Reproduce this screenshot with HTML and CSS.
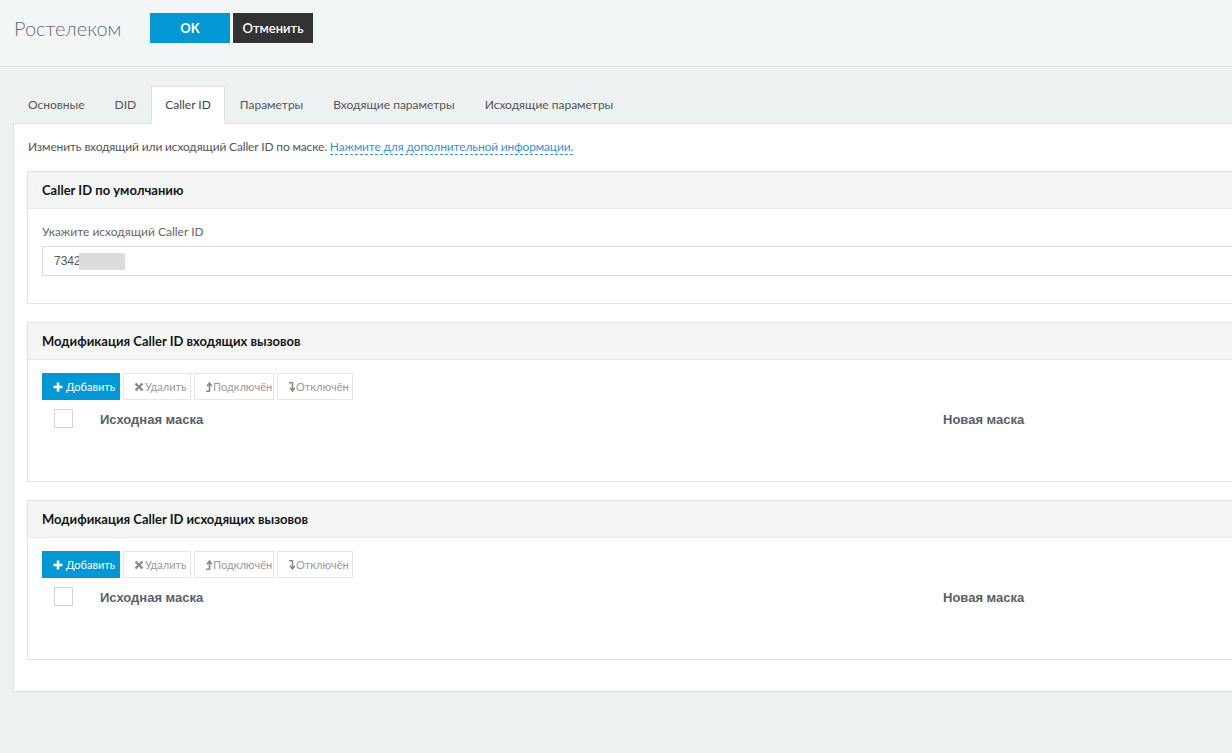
FILE: index.html
```html
<!DOCTYPE html>
<html lang="ru">
<head>
<meta charset="utf-8">
<title>Ростелеком</title>
<link rel="stylesheet" href="styles.css">
</head>
<body>
<header class="topbar">
  <h1 class="title">Ростелеком</h1>
  <button class="btn-ok">OK</button>
  <button class="btn-cancel">Отменить</button>
</header>
<main class="main">
  <nav class="tabs">
    <span class="tab">Основные</span>
    <span class="tab">DID</span>
    <span class="tab active">Caller ID</span>
    <span class="tab">Параметры</span>
    <span class="tab">Входящие параметры</span>
    <span class="tab">Исходящие параметры</span>
  </nav>
  <section class="content">
    <p class="intro">Изменить входящий или исходящий Caller ID по маске. <a class="more">Нажмите для дополнительной информации.</a></p>

    <div class="panel">
      <div class="panel-head">Caller ID по умолчанию</div>
      <div class="panel-body">
        <label class="label">Укажите исходящий Caller ID</label>
        <div class="input"><span>7342</span><span class="blur"></span></div>
      </div>
    </div>

    <div class="panel">
      <div class="panel-head">Модификация Caller ID входящих вызовов</div>
      <div class="panel-body tall">
        <div class="toolbar">
          <button class="tb add"><svg class="ic" width="10" height="10" viewBox="0 0 10 10"><path d="M5 0.5v9M0.5 5h9" stroke="#fff" stroke-width="2.6"/></svg>Добавить</button>
          <button class="tb"><svg class="ic" width="10" height="10" viewBox="0 0 10 10"><path d="M1.5 1.5l7 7M8.5 1.5l-7 7" stroke="#8a8a8a" stroke-width="2.4"/></svg>Удалить</button>
          <button class="tb"><svg class="ic" width="7" height="10" viewBox="0 0 7 10"><path d="M4.5 10V1.8M2 4.2 4.5 1 7 4.2M1 9.2h3.5" stroke="#8a8a8a" stroke-width="1.6" fill="none"/></svg>Подключён</button>
          <button class="tb"><svg class="ic" width="7" height="10" viewBox="0 0 7 10"><path d="M4.5 0v8.2M2 5.8 4.5 9 7 5.8M1 0.8h3.5" stroke="#8a8a8a" stroke-width="1.6" fill="none"/></svg>Отключён</button>
        </div>
        <div class="thead">
          <span class="check"></span>
          <span class="th">Исходная маска</span>
          <span class="th">Новая маска</span>
        </div>
      </div>
    </div>

    <div class="panel">
      <div class="panel-head">Модификация Caller ID исходящих вызовов</div>
      <div class="panel-body tall">
        <div class="toolbar">
          <button class="tb add"><svg class="ic" width="10" height="10" viewBox="0 0 10 10"><path d="M5 0.5v9M0.5 5h9" stroke="#fff" stroke-width="2.6"/></svg>Добавить</button>
          <button class="tb"><svg class="ic" width="10" height="10" viewBox="0 0 10 10"><path d="M1.5 1.5l7 7M8.5 1.5l-7 7" stroke="#8a8a8a" stroke-width="2.4"/></svg>Удалить</button>
          <button class="tb"><svg class="ic" width="7" height="10" viewBox="0 0 7 10"><path d="M4.5 10V1.8M2 4.2 4.5 1 7 4.2M1 9.2h3.5" stroke="#8a8a8a" stroke-width="1.6" fill="none"/></svg>Подключён</button>
          <button class="tb"><svg class="ic" width="7" height="10" viewBox="0 0 7 10"><path d="M4.5 0v8.2M2 5.8 4.5 9 7 5.8M1 0.8h3.5" stroke="#8a8a8a" stroke-width="1.6" fill="none"/></svg>Отключён</button>
        </div>
        <div class="thead">
          <span class="check"></span>
          <span class="th">Исходная маска</span>
          <span class="th">Новая маска</span>
        </div>
      </div>
    </div>
  </section>
</main>
</body>
</html>
```
FILE: styles.css
```css
* { box-sizing: border-box; }
html, body { margin: 0; padding: 0; }
body {
  background: #edf1f2;
  font-family: Lato, "Noto Sans", sans-serif;
  color: #555;
  overflow: hidden;
  height: 753px;
}
.topbar {
  height: 67px;
  background: #f3f6f7;
  border-bottom: 1px solid #dde2e4;
  display: flex;
  align-items: flex-start;
  padding: 13px 0 0 14px;
}
.title {
  margin: 0 30px 0 0;
  font-size: 20px;
  font-weight: 300;
  color: #666b70;
  line-height: 30px;
  width: 106px;
  white-space: nowrap;
}
.btn-ok, .btn-cancel {
  height: 30px;
  width: 80px;
  border: none;
  font-family: inherit;
  font-size: 13px;
  font-weight: 700;
  color: #fff;
  padding: 0;
  margin-right: 3px;
}
.btn-ok { background: #0398d4; }
.btn-cancel { background: #333; font-weight: 600; }

.main {
  padding: 19px 0 0 13px;
}
.tabs {
  display: flex;
  height: 37px;
  position: relative;
  z-index: 1;
}
.tab {
  padding: 0 15px;
  line-height: 37px;
  font-size: 12px;
  color: #555;
  white-space: nowrap;
}
.tab:first-child { padding-left: 15px; }
.tab.active {
  background: #fff;
  border: 1px solid #dde2e4;
  border-bottom: none;
  line-height: 36px;
  color: #444;
  height: 38px;
  padding: 0 13px;
}
.content {
  background: #fff;
  border: 1px solid #dde2e4;
  margin-right: -20px;
  padding: 13px 0 31px 13px;
}
.intro {
  margin: 0 0 14px 1px;
  font-size: 12px;
  line-height: 20px;
  letter-spacing: -0.15px;
  color: #555;
}
.more {
  color: #3b8fd2;
  border-bottom: 1px dashed #3b8fd2;
  text-decoration: none;
}
.panel {
  border: 1px solid #dfe3e5;
  margin-bottom: 18px;
  background: #fff;
}
.panel:last-child { margin-bottom: 0; }
.panel-head {
  height: 37px;
  background: #f4f5f5;
  border-bottom: 1px solid #e6e9ea;
  padding: 0 14px;
  line-height: 36px;
  font-size: 13px;
  font-weight: 700;
  color: #151515;
}
.panel-body {
  padding: 13px 0 27px 14px;
}
.panel-body.tall {
  height: 121px;
  padding: 13px 0 0 14px;
}
.label {
  display: block;
  font-size: 12px;
  line-height: 20px;
  color: #666;
  margin-bottom: 4px;
}
.input {
  height: 30px;
  border: 1px solid #d6dde0;
  display: flex;
  align-items: center;
  padding-left: 11px;
  font-family: "Liberation Sans", Arial, sans-serif;
  font-size: 12px;
  color: #555;
}
.blur {
  display: inline-block;
  width: 46px;
  height: 17px;
  background: #dcdcdc;
  margin-left: -2px;
}
.toolbar {
  display: flex;
  gap: 3px;
}
.tb {
  height: 27px;
  padding: 0 0 0 10px;
  border: 1px solid #e6e6e6;
  background: #fff;
  color: #999;
  font-family: Lato, "Noto Sans", sans-serif;
  font-size: 11px;
  display: flex;
  align-items: center;
  gap: 1px;
  white-space: nowrap;
}
.ic { flex-shrink: 0; display: block; }
.tb:nth-child(2) { width: 68px; }
.tb:nth-child(3) { width: 80px; }
.tb:nth-child(4) { width: 76px; }
.tb.add {
  width: 78px;
  background: #0398d4;
  border-color: #0398d4;
  color: #fff;
  padding-left: 10px;
  gap: 3px;
}
.thead {
  display: grid;
  grid-template-columns: 46px 843px 1fr;
  align-items: center;
  padding: 8px 0 0 12px;
  height: 28px;
}
.check {
  width: 19px;
  height: 19px;
  border: 1px solid #ccd4d7;
  background: #fff;
}
.th {
  font-family: "Liberation Sans", Arial, sans-serif;
  font-size: 13px;
  font-weight: 700;
  color: #5b6068;
  padding-top: 2px;
}
```
